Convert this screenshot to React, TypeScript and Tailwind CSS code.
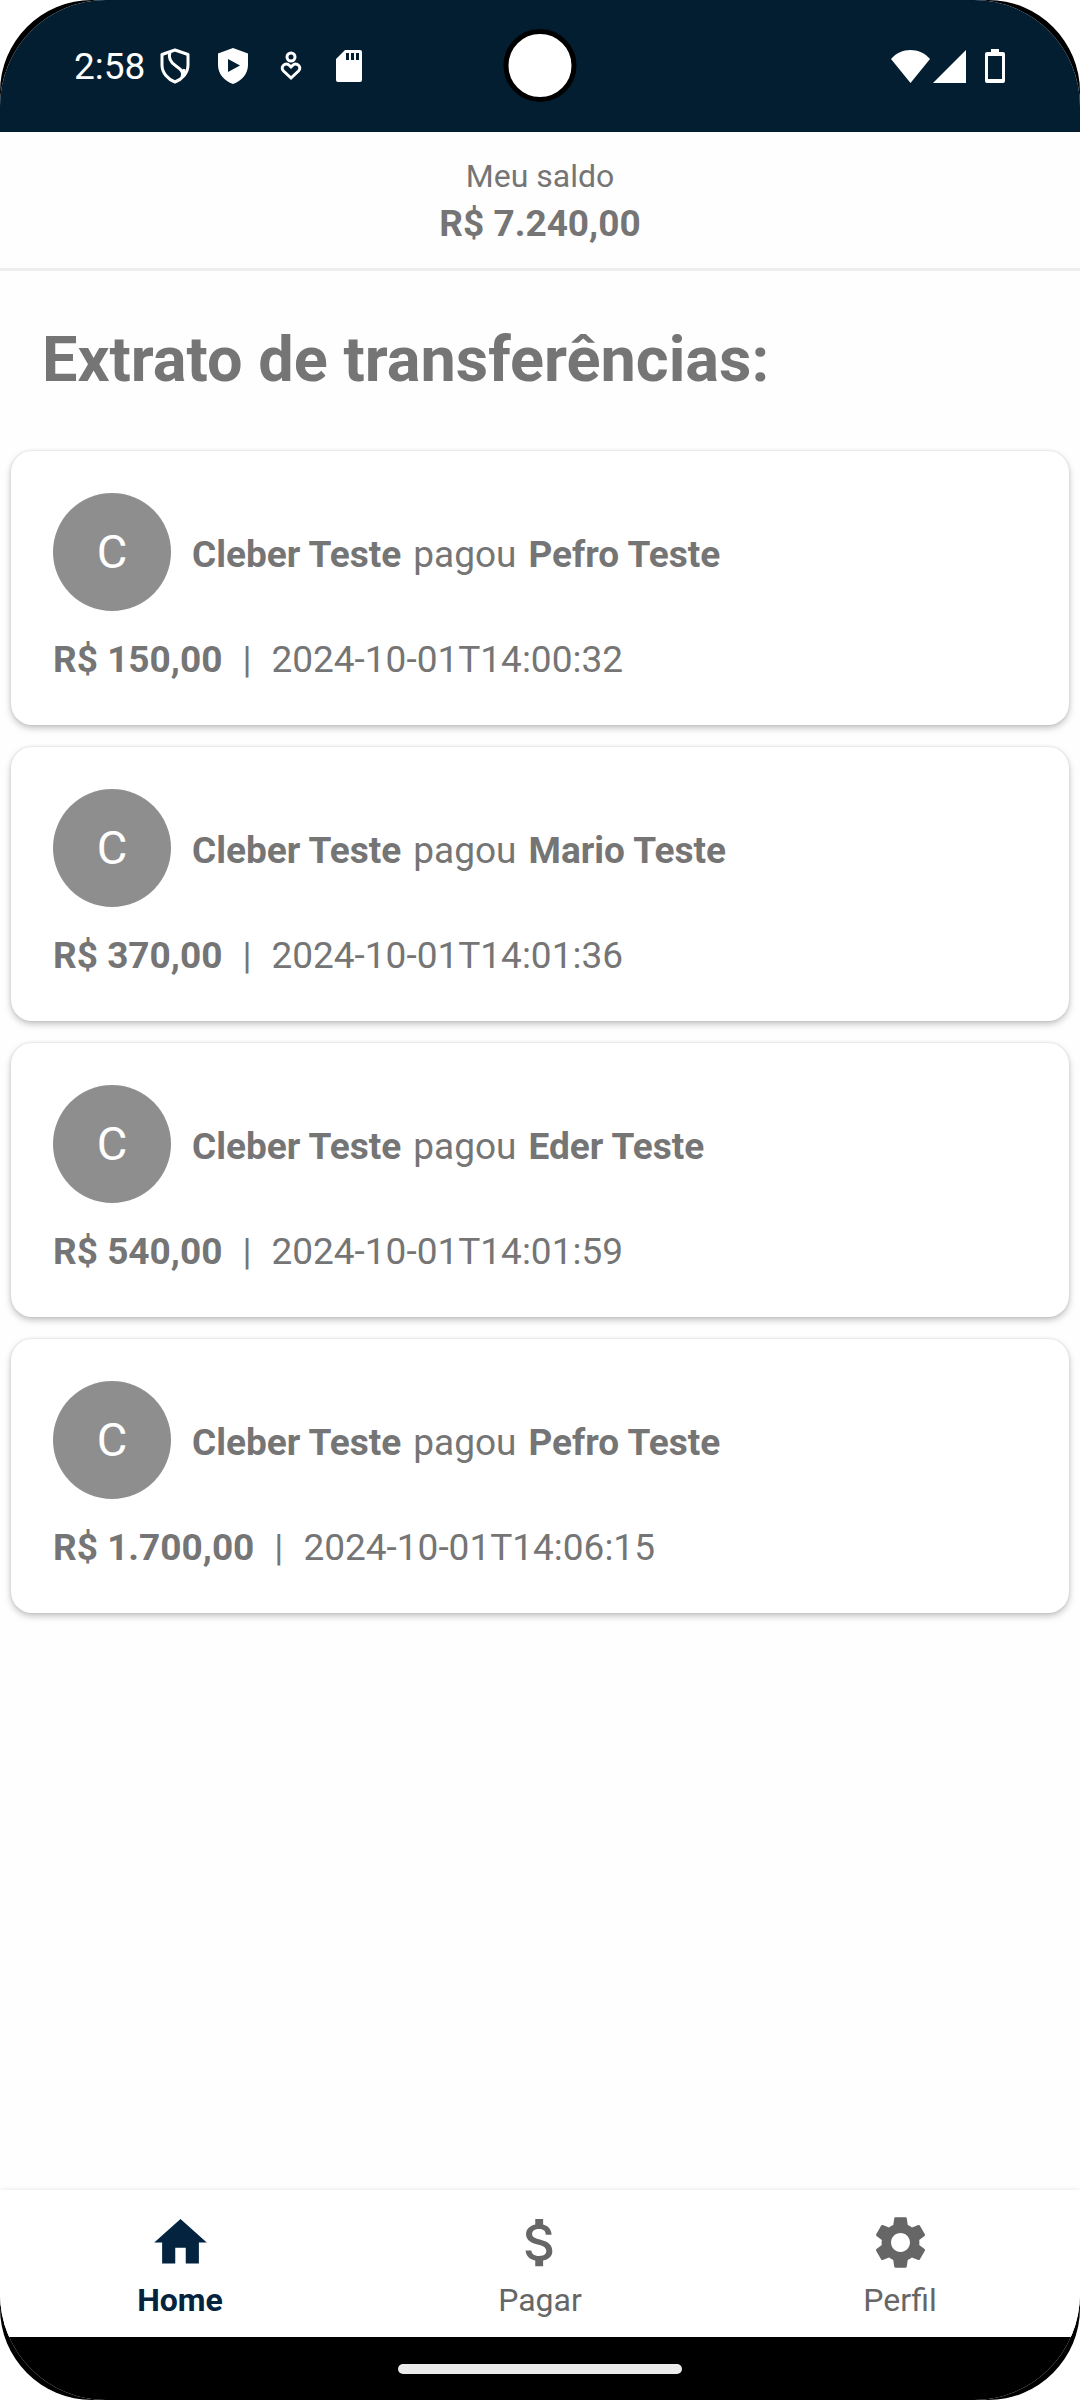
import { MdHome, MdAttachMoney, MdSettings } from "react-icons/md";

const transfers = [
  { id: 1, from: "Cleber Teste", to: "Pefro Teste", amount: "R$ 150,00", date: "2024-10-01T14:00:32" },
  { id: 2, from: "Cleber Teste", to: "Mario Teste", amount: "R$ 370,00", date: "2024-10-01T14:01:36" },
  { id: 3, from: "Cleber Teste", to: "Eder Teste", amount: "R$ 540,00", date: "2024-10-01T14:01:59" },
  { id: 4, from: "Cleber Teste", to: "Pefro Teste", amount: "R$ 1.700,00", date: "2024-10-01T14:06:15" },
];

const tabs = [
  { label: "Home", Icon: MdHome, active: true },
  { label: "Pagar", Icon: MdAttachMoney, active: false },
  { label: "Perfil", Icon: MdSettings, active: false },
];

function StatusBar() {
  return (
    <header className="relative flex h-[132px] items-center justify-between bg-[#031e31] pl-[74px] pr-[75px] text-white">
      <div className="flex items-center">
        <span className="text-[37px] leading-none">2:58</span>
        <svg viewBox="0 0 30 36" className="ml-[15px] h-9 w-[30px]" fill="none" stroke="currentColor" strokeWidth="3" strokeLinejoin="round">
          <path d="M15 2 L28 6.5 V17 C28 25 22 31.5 15 34 C8 31.5 2 25 2 17 V6.5 Z" />
          <path d="M10 4 C8 10 10 14 16 18 C21 21.5 24 24 22 29" />
          <path d="M24 21 L23 27" />
        </svg>
        <svg viewBox="0 0 30 36" className="ml-7 h-9 w-[30px]" fill="currentColor" fillRule="evenodd">
          <path d="M15 0 L30 5.5 V17 C30 26 23.5 33 15 36 C6.5 33 0 26 0 17 V5.5 Z M10 11 V24 L22 17.5 Z" />
        </svg>
        <svg viewBox="0 0 22 30" className="ml-8 h-[30px] w-[22px]" fill="none" stroke="currentColor" strokeWidth="3">
          <circle cx="11" cy="6" r="4" />
          <path d="M11 27 L3.5 20 C-0.5 16 5.5 10.5 9.5 14.5 L11 16 L12.5 14.5 C16.5 10.5 22.5 16 18.5 20 Z" />
        </svg>
        <svg viewBox="0 0 26 32" className="ml-[34px] h-8 w-[26px]" fill="currentColor" fillRule="evenodd">
          <path d="M9 0 H24 Q26 0 26 2 V30 Q26 32 24 32 H2 Q0 32 0 30 V9 Z M10 3 V10 H13 V3 Z M15 3 V10 H18 V3 Z M20 3 V10 H23 V3 Z" />
        </svg>
      </div>
      <span className="absolute left-1/2 top-[29px] size-[73px] -translate-x-1/2 rounded-full border-[5px] border-black bg-white" />
      <div className="flex items-center">
        <svg viewBox="0 0 39 33" className="h-[33px] w-[39px]" fill="currentColor">
          <path d="M0 9 C10 -3 29 -3 39 9 L19.5 33 Z" />
        </svg>
        <svg viewBox="0 0 33 33" className="ml-[3px] size-[33px]" fill="currentColor">
          <path d="M33 0 V33 H0 Z" />
        </svg>
        <svg viewBox="0 0 20 34" className="ml-[19px] h-[34px] w-5" fill="currentColor" fillRule="evenodd">
          <path d="M6 0 H14 V3 H18 Q20 3 20 5 V32 Q20 34 18 34 H2 Q0 34 0 32 V5 Q0 3 2 3 H6 Z M3 7 V30 H17 V7 Z" />
        </svg>
      </div>
    </header>
  );
}

export default function App() {
  return (
    <div className="bg-white font-[Roboto,sans-serif]">
      <div className="min-h-screen rounded-[92px] bg-black text-[#757575]">
        <div className="flex min-h-screen flex-col overflow-hidden rounded-[106px] bg-[#fefefe]">
          <StatusBar />
          <section className="flex flex-col items-center border-b-[3px] border-[#eeeeee] pb-5 pt-[22px] text-center">
            <p className="text-[32px] leading-[44px]">Meu saldo</p>
            <p className="mt-[2px] text-[37px] font-bold leading-[48px]">R$ 7.240,00</p>
          </section>
          <main className="grow">
            <h1 className="px-[42px] pb-[50px] pt-12 text-[63px] font-bold leading-[82px]">Extrato de transferências:</h1>
            <ul className="flex flex-col gap-[22px] px-[11px]">
              {transfers.map((t) => (
                <li key={t.id} className="rounded-[21px] bg-white px-[42px] pb-10 pt-[42px] shadow-[0_3px_7px_rgba(0,0,0,0.24),0_0_3px_rgba(0,0,0,0.10)]">
                  <div className="flex items-center gap-[21px]">
                    <span className="flex size-[118px] shrink-0 items-center justify-center rounded-full bg-[#8e8e8e] text-[47px] text-white">C</span>
                    <p className="flex flex-wrap gap-x-3 pt-[6px] text-[37px] leading-[48px]">
                      <b>{t.from}</b>
                      <span>pagou</span>
                      <b>{t.to}</b>
                    </p>
                  </div>
                  <p className="mt-6 flex flex-wrap gap-x-5 text-[37px] leading-[50px]">
                    <b>{t.amount}</b>
                    <span>|</span>
                    <time dateTime={t.date}>{t.date}</time>
                  </p>
                </li>
              ))}
            </ul>
          </main>
          <nav className="grid h-[147px] grid-cols-3 bg-white shadow-[0_0_5px_rgba(0,0,0,0.10)]">
            {tabs.map(({ label, Icon, active }) => (
              <button
                key={label}
                type="button"
                className={active ? "flex flex-col items-center pt-[21px] font-bold text-[#03233e]" : "flex flex-col items-center pt-[21px] text-[#666666]"}
              >
                <Icon className="size-[63px]" />
                <span className="text-[32px] leading-[52px]">{label}</span>
              </button>
            ))}
          </nav>
          <div className="flex h-[63px] items-center justify-center bg-black">
            <span className="h-[10px] w-[284px] rounded-full bg-[#ebebeb]" />
          </div>
        </div>
      </div>
    </div>
  );
}
